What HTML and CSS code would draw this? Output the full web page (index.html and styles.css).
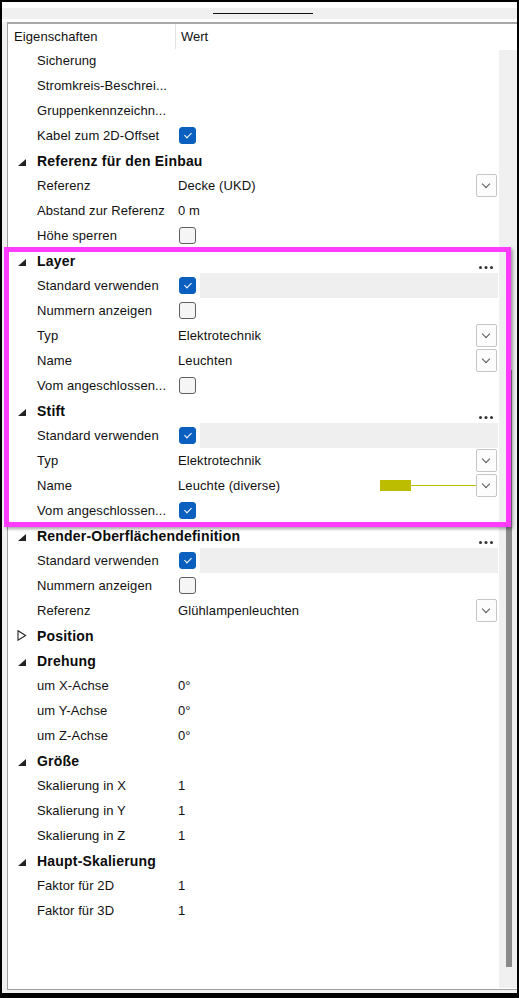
FILE: index.html
```html
<!DOCTYPE html>
<html lang="de">
<head>
    <meta charset="UTF-8">
    <meta name="viewport" content="width=device-width, initial-scale=1.0">
    <title>Eigenschaften</title>
    <link rel="stylesheet" href="styles.css">
</head>
<body>
    <div class="window">
        <div class="topbar">
            <div class="band"><div class="grip"></div></div>
        </div>
        <div class="panel">
            <div class="head">
                <div class="head-lbl">Eigenschaften</div>
                <div class="head-val">Wert</div>
            </div>
            <div class="body">
                <div class="rows">
                    <div class="row"><div class="lbl">Sicherung</div><div class="val"></div></div>
                    <div class="row"><div class="lbl">Stromkreis-Beschrei...</div><div class="val"></div></div>
                    <div class="row"><div class="lbl">Gruppenkennzeichn...</div><div class="val"></div></div>
                    <div class="row"><div class="lbl">Kabel zum 2D-Offset</div><div class="val"><span class="check on"></span></div></div>

                    <div class="cat"><span class="tri"></span>Referenz für den Einbau</div>
                    <div class="row"><div class="lbl">Referenz</div><div class="val">Decke (UKD)<span class="drop"></span></div></div>
                    <div class="row"><div class="lbl">Abstand zur Referenz</div><div class="val">0 m</div></div>
                    <div class="row"><div class="lbl">Höhe sperren</div><div class="val"><span class="check"></span></div></div>

                    <div class="cat"><span class="tri"></span>Layer<span class="more"></span></div>
                    <div class="row"><div class="lbl">Standard verwenden</div><div class="val"><span class="check on"></span><span class="field"></span></div></div>
                    <div class="row"><div class="lbl">Nummern anzeigen</div><div class="val"><span class="check"></span></div></div>
                    <div class="row"><div class="lbl">Typ</div><div class="val">Elektrotechnik<span class="drop"></span></div></div>
                    <div class="row"><div class="lbl">Name</div><div class="val">Leuchten<span class="drop"></span></div></div>
                    <div class="row"><div class="lbl">Vom angeschlossen...</div><div class="val"><span class="check"></span></div></div>

                    <div class="cat"><span class="tri"></span>Stift<span class="more"></span></div>
                    <div class="row"><div class="lbl">Standard verwenden</div><div class="val"><span class="check on"></span><span class="field"></span></div></div>
                    <div class="row"><div class="lbl">Typ</div><div class="val">Elektrotechnik<span class="drop"></span></div></div>
                    <div class="row"><div class="lbl">Name</div><div class="val">Leuchte (diverse)<span class="swatch"></span><span class="swatch-line"></span><span class="drop"></span></div></div>
                    <div class="row"><div class="lbl">Vom angeschlossen...</div><div class="val"><span class="check on"></span></div></div>

                    <div class="cat"><span class="tri"></span>Render-Oberflächendefinition<span class="more"></span></div>
                    <div class="row"><div class="lbl">Standard verwenden</div><div class="val"><span class="check on"></span><span class="field"></span></div></div>
                    <div class="row"><div class="lbl">Nummern anzeigen</div><div class="val"><span class="check"></span></div></div>
                    <div class="row"><div class="lbl">Referenz</div><div class="val">Glühlampenleuchten<span class="drop"></span></div></div>

                    <div class="cat"><svg class="tri-open" width="10" height="11" viewBox="0 0 10 11"><polygon points="1,0.8 8.6,5.5 1,10.2" fill="none" stroke="#222" stroke-width="1.1"/></svg>Position</div>

                    <div class="cat"><span class="tri"></span>Drehung</div>
                    <div class="row"><div class="lbl">um X-Achse</div><div class="val">0°</div></div>
                    <div class="row"><div class="lbl">um Y-Achse</div><div class="val">0°</div></div>
                    <div class="row"><div class="lbl">um Z-Achse</div><div class="val">0°</div></div>

                    <div class="cat"><span class="tri"></span>Größe</div>
                    <div class="row"><div class="lbl">Skalierung in X</div><div class="val">1</div></div>
                    <div class="row"><div class="lbl">Skalierung in Y</div><div class="val">1</div></div>
                    <div class="row"><div class="lbl">Skalierung in Z</div><div class="val">1</div></div>

                    <div class="cat"><span class="tri"></span>Haupt-Skalierung</div>
                    <div class="row"><div class="lbl">Faktor für 2D</div><div class="val">1</div></div>
                    <div class="row"><div class="lbl">Faktor für 3D</div><div class="val">1</div></div>
                </div>
                <div class="scroll"><div class="thumb"></div></div>
            </div>
        </div>
    </div>
    <div class="mark"></div>
</body>
</html>
```

FILE: styles.css
```css
* {
    box-sizing: border-box;
}
body {
    margin: 0;
    background-color: #000;
    font-family: "Liberation Sans", Arial, sans-serif;
    font-size: 13px;
    color: #111;
    position: relative;
}
.window {
    margin: 2px 2px 0 2px;
    height: 991px;
    padding-bottom: 3px;
    background-color: #f0f0f0;
    display: flex;
    flex-direction: column;
}
.topbar {
    height: 20px;
    padding: 6px 0 3px;
    background-color: #fff;
}
.band {
    height: 11px;
    padding-top: 5px;
    background-color: #f0f0f0;
}
.grip {
    margin-left: 211px;
    width: 100px;
    height: 1px;
    background-color: #111;
}
.panel {
    flex: 1;
    margin-left: 5px;
    background-color: #fff;
    border-top: 2px solid #a8a8a8;
    border-left: 1px solid #a0a0a0;
    border-bottom: 1px solid #a0a0a0;
    display: flex;
    flex-direction: column;
}
.head {
    height: 25px;
    display: flex;
    align-items: center;
}
.head-lbl {
    width: 168px;
    height: 100%;
    padding-left: 6px;
    line-height: 25px;
    border-right: 1px solid #e3e3e3;
    letter-spacing: 0.1px;
}
.head-val {
    padding-left: 5px;
}
.body {
    flex: 1;
    display: flex;
    min-height: 0;
}
.rows {
    flex: 1;
    margin-top: -1px;
}
.row {
    height: 25px;
    display: grid;
    grid-template-columns: 170px 1fr;
    align-items: center;
}
.lbl {
    padding-left: 29px;
    white-space: nowrap;
    overflow: hidden;
    letter-spacing: 0.1px;
}
.val {
    height: 25px;
    display: flex;
    align-items: center;
    white-space: nowrap;
    letter-spacing: 0.1px;
}
.cat {
    height: 25px;
    display: flex;
    align-items: center;
    padding-left: 10px;
    font-size: 14px;
    font-weight: bold;
    letter-spacing: 0.2px;
    color: #0c0c0c;
}
.tri {
    width: 0;
    height: 0;
    margin: 3px 11px 0 0;
    border-left: 8px solid transparent;
    border-bottom: 7px solid #222;
}
.tri-open {
    margin: 0 10px 0 -1px;
}
.more {
    align-self: flex-end;
    width: 3px;
    height: 3px;
    margin: 0 17px 4px auto;
    border-radius: 50%;
    background-color: #333;
    box-shadow: 5.5px 0 #333, 11px 0 #333;
}
.check {
    position: relative;
    width: 17px;
    height: 17px;
    margin-left: 1px;
    border: 1px solid #5f5f5f;
    border-radius: 3px;
    background-color: #f5f5f5;
}
.check.on {
    border-color: #0a5fbf;
    background-color: #0a5fbf;
}
.check.on::after {
    content: "";
    position: absolute;
    left: 6px;
    top: 3px;
    width: 3px;
    height: 6px;
    border-right: 1.3px solid #fff;
    border-bottom: 1.3px solid #fff;
    transform: rotate(45deg);
}
.field {
    flex: 1;
    height: 25px;
    margin: 0 1px 0 4px;
    background-color: #efefef;
}
.drop {
    position: relative;
    width: 21px;
    height: 23px;
    margin: 0 2px 0 auto;
    border: 1px solid #c6c6c6;
    border-radius: 2px;
    background-color: #fcfcfc;
}
.drop::after {
    content: "";
    position: absolute;
    left: 6px;
    top: 6px;
    width: 5px;
    height: 5px;
    border-right: 1px solid #555;
    border-bottom: 1px solid #555;
    transform: rotate(45deg);
}
.swatch {
    width: 31px;
    height: 11px;
    margin-left: auto;
    background-color: #bcbc00;
}
.swatch-line {
    width: 65px;
    height: 1px;
    background-color: #bcbc00;
}
.swatch-line + .drop {
    margin-left: 0;
}
.scroll {
    width: 18px;
    margin: 1px 0;
    padding: 320px 0 0 7px;
    background-color: #f0f0f0;
}
.thumb {
    width: 6px;
    height: 597px;
    background-color: #8a8a8a;
}
.mark {
    position: absolute;
    left: 4px;
    top: 247px;
    width: 507px;
    height: 280px;
    border: 5px solid #ff3cff;
    box-shadow: 2px 2px 3px rgba(0, 0, 0, 0.35);
}
```
